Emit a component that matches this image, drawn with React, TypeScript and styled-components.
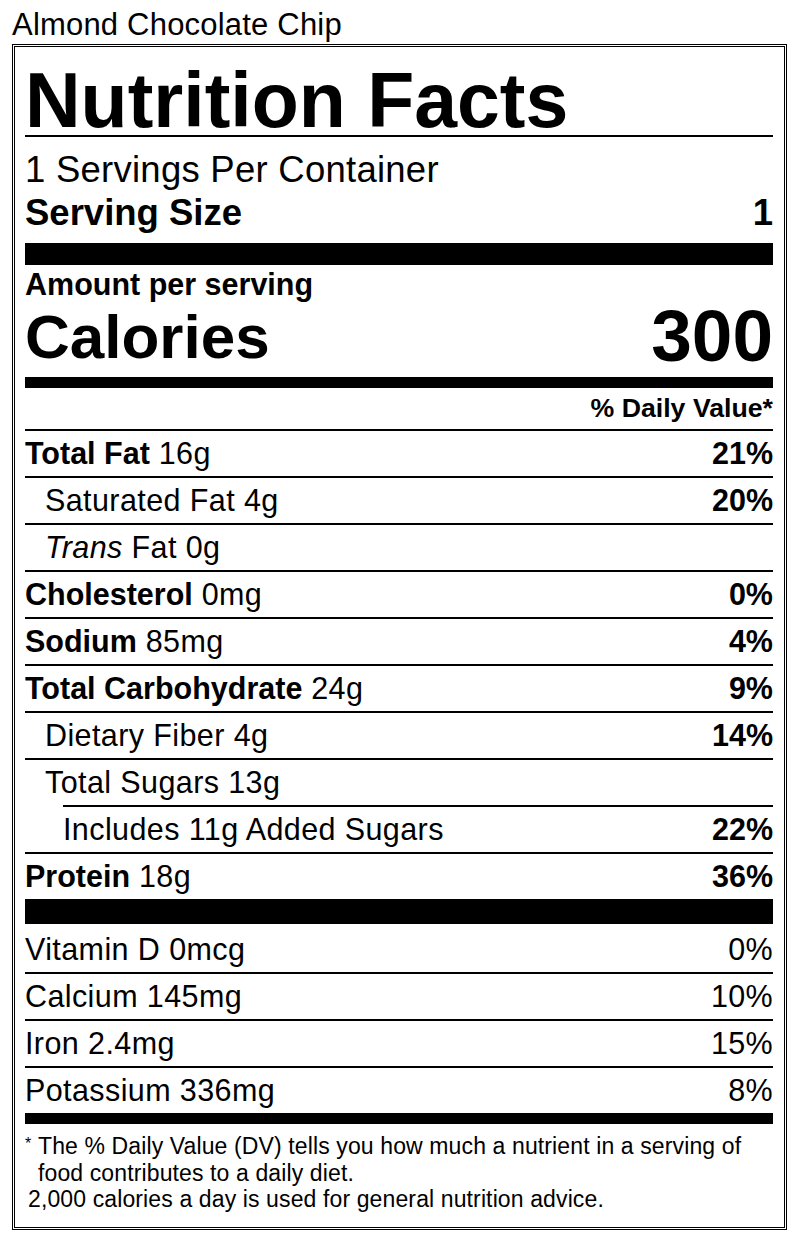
import React from "react";
import styled, { createGlobalStyle } from "styled-components";

const Global = createGlobalStyle`
  html, body { margin: 0; padding: 0; background: #fff; }
  body {
    font-family: "Liberation Sans", Arial, Helvetica, sans-serif;
    color: #000;
  }
  * { box-sizing: border-box; }
`;

const Page = styled.div`
  width: 800px;
  padding: 7px 0 0 12px;
`;

const ProductName = styled.div`
  font-size: 31px;
  line-height: 35px;
  letter-spacing: 0.2px;
  margin-bottom: 2px;
`;

const Label = styled.section`
  width: 775px;
  border: 3px double #000;
  padding: 0 11px 14.5px 10px;
`;

const Heading = styled.h1`
  margin: 0;
  padding-top: 18px;
  font-size: 77px;
  line-height: 70px;
  font-weight: 700;
`;

const Rule = styled.div<{ $h?: number; $inset?: number }>`
  height: ${(p) => p.$h ?? 2}px;
  margin-left: ${(p) => p.$inset ?? 0}px;
  background: #000;
`;

const ServingBlock = styled.div`
  padding: 11px 0 9px;
  font-size: 36.5px;
  line-height: 43px;
`;

const ServingsLine = styled.div`
  letter-spacing: 0.25px;
`;

const SplitLine = styled.div<{ $bold?: boolean }>`
  display: flex;
  justify-content: space-between;
  font-weight: ${(p) => (p.$bold ? 700 : 400)};
`;

const AmountLabel = styled.div`
  padding-top: 3px;
  font-size: 30.5px;
  line-height: 32px;
  font-weight: 700;
`;

const CaloriesRow = styled.div`
  display: flex;
  justify-content: space-between;
  align-items: flex-end;
  padding-bottom: 5px;
  font-weight: 700;
`;

const CaloriesLabel = styled.span`
  font-size: 62px;
  line-height: 62px;
  margin-bottom: 4px;
`;

const CaloriesValue = styled.span`
  font-size: 73px;
  line-height: 72px;
`;

const DVHeader = styled.div`
  text-align: right;
  font-size: 26.7px;
  line-height: 41px;
  font-weight: 700;
`;

const Row = styled.div<{ $indent?: number; $top?: number }>`
  display: flex;
  justify-content: space-between;
  padding-left: ${(p) => p.$indent ?? 0}px;
  padding-top: ${(p) => p.$top ?? 0}px;
  font-size: 30.5px;
  line-height: 45px;
  white-space: nowrap;
  letter-spacing: 0.4px;
  b {
    letter-spacing: 0;
  }
`;

const Value = styled.span<{ $bold?: boolean }>`
  font-weight: ${(p) => (p.$bold ? 700 : 400)};
  letter-spacing: ${(p) => (p.$bold ? 0 : 0.3)}px;
`;

const Footnote = styled.div`
  padding-top: 9px;
  font-size: 23px;
  line-height: 26.5px;
  letter-spacing: 0.12px;
`;

const FootPara = styled.p<{ $hang?: number; $pad?: number }>`
  margin: 0;
  padding-left: ${(p) => (p.$hang ?? 0) + (p.$pad ?? 0)}px;
  text-indent: ${(p) => -(p.$hang ?? 0)}px;
`;

const Star = styled.span`
  display: inline-block;
  width: 13px;
  text-indent: 0;
  font-size: 16px;
  vertical-align: top;
  line-height: 22px;
`;

type Nutrient = {
  name: string;
  amount: string;
  dv?: string;
  bold?: boolean;
  italic?: string;
  indent?: number;
};

const macros: Nutrient[] = [
  { name: "Total Fat", amount: "16g", dv: "21%", bold: true },
  { name: "Saturated Fat", amount: "4g", dv: "20%", indent: 20 },
  { name: "Fat", italic: "Trans", amount: "0g", indent: 20 },
  { name: "Cholesterol", amount: "0mg", dv: "0%", bold: true },
  { name: "Sodium", amount: "85mg", dv: "4%", bold: true },
  { name: "Total Carbohydrate", amount: "24g", dv: "9%", bold: true },
  { name: "Dietary Fiber", amount: "4g", dv: "14%", indent: 20 },
  { name: "Total Sugars", amount: "13g", indent: 20 },
  { name: "Includes 11g Added Sugars", amount: "", dv: "22%", indent: 38 },
  { name: "Protein", amount: "18g", dv: "36%", bold: true },
];

const micros: Nutrient[] = [
  { name: "Vitamin D", amount: "0mcg", dv: "0%" },
  { name: "Calcium", amount: "145mg", dv: "10%" },
  { name: "Iron", amount: "2.4mg", dv: "15%" },
  { name: "Potassium", amount: "336mg", dv: "8%" },
];

function NutrientName({ n }: { n: Nutrient }) {
  return (
    <span>
      {n.bold ? <b>{n.name}</b> : n.italic ? <><i>{n.italic}</i> {n.name}</> : n.name}
      {n.amount ? ` ${n.amount}` : ""}
    </span>
  );
}

export default function App() {
  return (
    <Page>
      <Global />
      <ProductName>Almond Chocolate Chip</ProductName>
      <Label>
        <Heading>Nutrition Facts</Heading>
        <Rule />
        <ServingBlock>
          <ServingsLine>1 Servings Per Container</ServingsLine>
          <SplitLine $bold>
            <span>Serving Size</span>
            <span>1</span>
          </SplitLine>
        </ServingBlock>
        <Rule $h={22} />
        <AmountLabel>Amount per serving</AmountLabel>
        <CaloriesRow>
          <CaloriesLabel>Calories</CaloriesLabel>
          <CaloriesValue>300</CaloriesValue>
        </CaloriesRow>
        <Rule $h={11} />
        <DVHeader>% Daily Value*</DVHeader>
        <Rule />
        {macros.map((n, i) => (
          <React.Fragment key={n.name}>
            <Row $indent={n.indent}>
              <NutrientName n={n} />
              <Value $bold>{n.dv ?? ""}</Value>
            </Row>
            {i < macros.length - 1 && <Rule $inset={n.name === "Total Sugars" ? 38 : 0} />}
          </React.Fragment>
        ))}
        <Rule $h={25} />
        {micros.map((n, i) => (
          <React.Fragment key={n.name}>
            <Row $top={i === 0 ? 3 : 0}>
              <NutrientName n={n} />
              <Value>{n.dv}</Value>
            </Row>
            {i < micros.length - 1 && <Rule />}
          </React.Fragment>
        ))}
        <Rule $h={11} />
        <Footnote>
          <FootPara $hang={13}>
            <Star>*</Star>The % Daily Value (DV) tells you how much a nutrient in a serving of food contributes to a daily diet.
          </FootPara>
          <FootPara $pad={3}>2,000 calories a day is used for general nutrition advice.</FootPara>
        </Footnote>
      </Label>
    </Page>
  );
}
